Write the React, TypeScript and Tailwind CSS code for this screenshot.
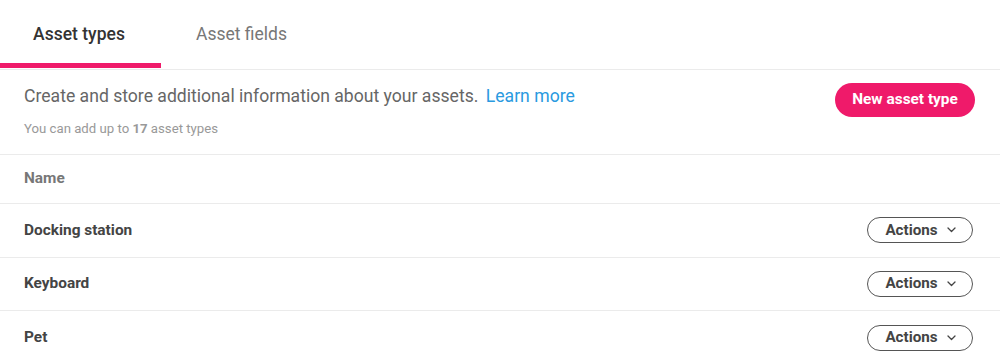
import * as React from "react";

const rows = ["Docking station", "Keyboard", "Pet"];

function Chevron() {
  return (
    <svg width="9" height="6" viewBox="0 0 9 6" fill="none" className="ml-[9px]">
      <path d="M1 1l3.5 3.5L8 1" stroke="#444" strokeWidth="1.3" strokeLinecap="round" strokeLinejoin="round" />
    </svg>
  );
}

export default function App() {
  const [tab, setTab] = React.useState("types");

  return (
    <div className="w-[1000px] h-[363px] overflow-hidden bg-white font-['Roboto',sans-serif] text-[#424242]">
      <div className="flex h-[70px] border-b border-[#ebebeb]">
        {[
          { key: "types", label: "Asset types" },
          { key: "fields", label: "Asset fields" },
        ].map((t) => (
          <button
            key={t.key}
            onClick={() => setTab(t.key)}
            className={`relative flex w-[161px] justify-center pt-[21px] text-[17.5px] ${
              tab === t.key ? "pr-[3px] font-medium text-[#333]" : "text-[#777]"
            }`}
          >
            {t.label}
            {tab === t.key && (
              <span className="absolute bottom-[1px] left-0 h-[5px] w-full bg-[#ef1a6a]" />
            )}
          </button>
        ))}
      </div>

      <div className="flex h-[85px] items-start justify-between border-b border-[#ebebeb] px-6">
        <div className="pt-[15px]">
          <p className="text-[17.6px] leading-[22px] text-[#666]">
            Create and store additional information about your assets.{" "}
            <a className="ml-[3px] text-[#2a9ae0]">Learn more</a>
          </p>
          <p className="mt-[14px] text-[13.2px] leading-[16px] text-[#999]">
            You can add up to <span className="font-bold">17</span> asset types
          </p>
        </div>
        <button className="mt-[13px] mr-[1px] h-[34px] w-[140px] rounded-full bg-[#ef1a6a] text-[15.4px] font-bold text-white">
          New asset type
        </button>
      </div>

      <div className="flex h-[49px] items-center border-b border-[#ebebeb] px-6 text-[15.4px] font-bold text-[#777]">
        Name
      </div>

      {rows.map((name) => (
        <div
          key={name}
          className="flex h-[53.5px] items-center justify-between border-b border-[#ebebeb] px-6 last:border-b-0"
        >
          <span className="text-[15.4px] font-bold text-[#444]">{name}</span>
          <button className="mr-[3px] flex h-[26px] w-[106px] items-center justify-center rounded-full border border-[#555] pl-[1px] text-[15.2px] font-bold text-[#444]">
            Actions
            <Chevron />
          </button>
        </div>
      ))}
    </div>
  );
}
